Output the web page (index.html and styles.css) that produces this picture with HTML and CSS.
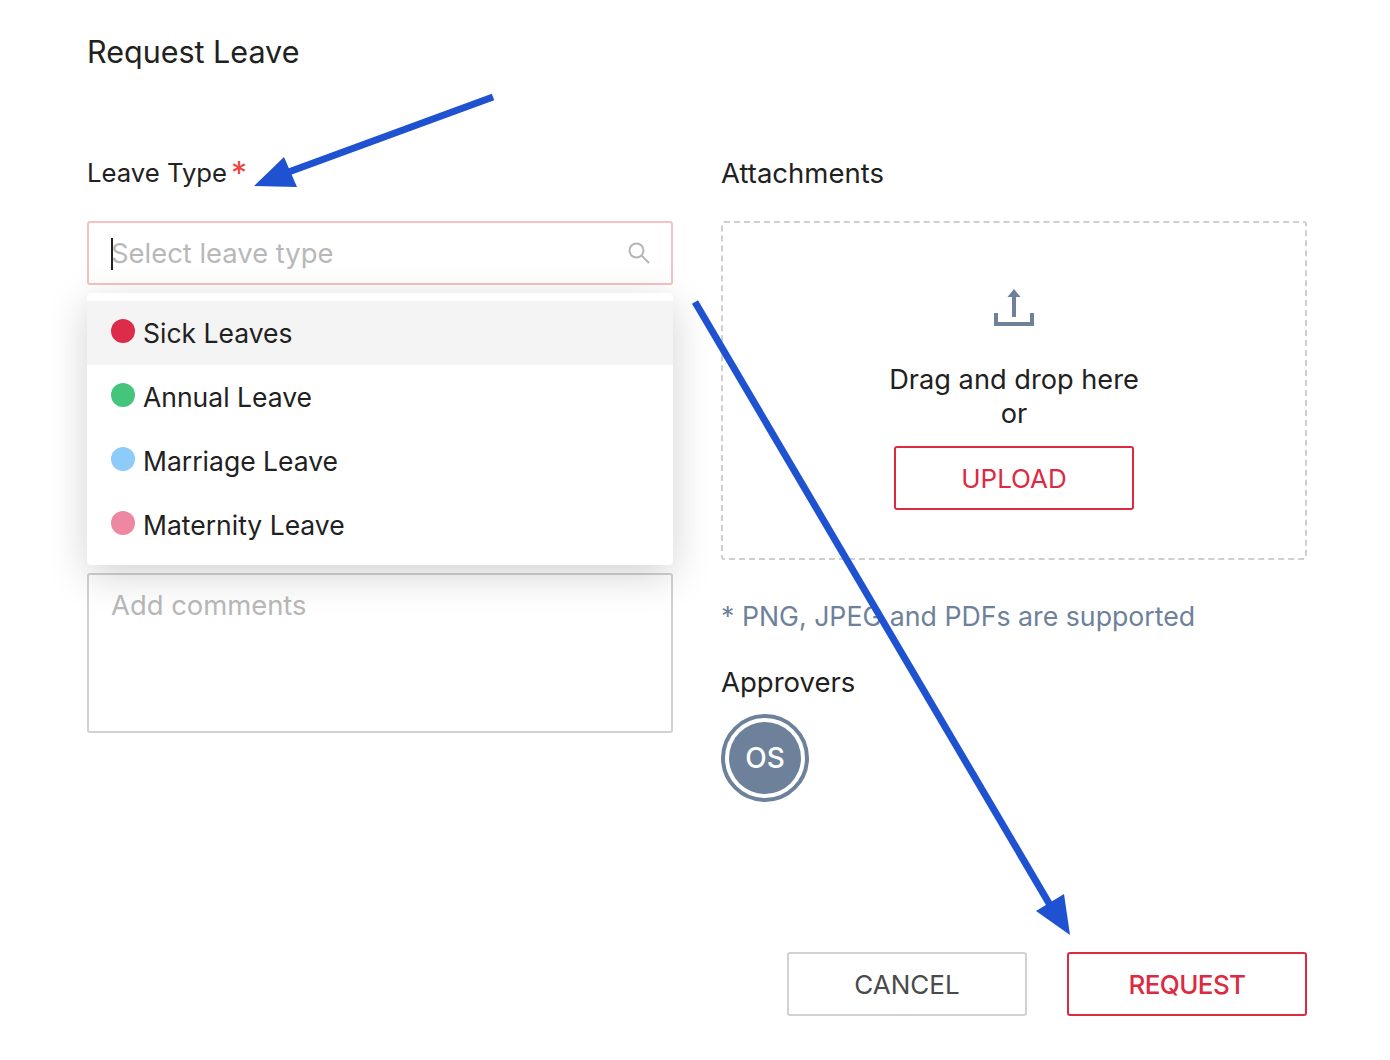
FILE: index.html
```html
<!DOCTYPE html>
<html lang="en">
<head>
  <meta charset="UTF-8">
  <title>Request Leave</title>
  <link rel="stylesheet" href="styles.css">
</head>
<body>
  <div class="page">
    <h1 class="page-title">Request Leave</h1>

    <div class="columns">
      <div class="col">
        <div class="label label-type">Leave Type<span class="required">*</span></div>

        <div class="select-wrap">
          <div class="select-box">
            <span class="caret"></span>
            <input class="select-input" type="text" placeholder="Select leave type">
            <svg class="search-icon" width="24" height="24" viewBox="0 0 24 24" fill="none" stroke="#b5b5b5" stroke-width="2">
              <circle cx="9.500" cy="9.500" r="7"/>
              <path d="M14.500 14.500l7.500 7.500"/>
            </svg>
          </div>

          <div class="dropdown">
            <div class="option active"><span class="dot dot-red"></span>Sick Leaves</div>
            <div class="option"><span class="dot dot-green"></span>Annual Leave</div>
            <div class="option"><span class="dot dot-blue"></span>Marriage Leave</div>
            <div class="option"><span class="dot dot-pink"></span>Maternity Leave</div>
          </div>
        </div>

        <textarea class="comments" placeholder="Add comments"></textarea>
      </div>

      <div class="col">
        <div class="label">Attachments</div>

        <div class="dropzone">
          <svg class="upload-icon" width="42" height="40" viewBox="0 0 42 40" fill="none" stroke="#6d819b" stroke-width="4">
            <path d="M21 29V6"/>
            <path d="M21 1l6.500 8h-13z" fill="#6d819b" stroke="none"/>
            <path d="M3 25v11h36V25"/>
          </svg>
          <div class="drop-text">Drag and drop here<br>or</div>
          <button class="btn btn-red">UPLOAD</button>
        </div>

        <div class="hint">* PNG, JPEG and PDFs are supported</div>

        <div class="label approvers-label">Approvers</div>
        <div class="avatar"><span class="avatar-inner">OS</span></div>
      </div>
    </div>

    <div class="actions">
      <button class="btn btn-grey">CANCEL</button>
      <button class="btn btn-red btn-request">REQUEST</button>
    </div>
  </div>

  <!-- annotation arrows drawn over the screenshot -->
  <svg class="arrows" width="1390" height="1060" viewBox="0 0 1390 1060">
    <path d="M493 97L275 177" stroke="#1f52d0" stroke-width="7" fill="none"/>
    <path d="M254 186L284 157L297 187Z" fill="#1f52d0"/>
    <path d="M695 302L1050 905" stroke="#1f52d0" stroke-width="7" fill="none"/>
    <path d="M1070 935L1036 911L1064 894Z" fill="#1f52d0"/>
  </svg>
</body>
</html>
```

FILE: styles.css
```css
* {
  box-sizing: border-box;
}

body {
  margin: 0;
  background-color: #fff;
  font-family: 'Inter', 'Liberation Sans', sans-serif;
  color: #212121;
}

.page {
  position: relative;
  width: 1390px;
  height: 1060px;
  padding: 33px 83px 0 87px;
}

.page-title {
  margin: 0 0 87px;
  font-size: 30.500px;
  line-height: 38px;
  font-weight: 400;
}

.columns {
  display: grid;
  grid-template-columns: 586px 586px;
  gap: 48px;
}

.label {
  font-size: 27.500px;
  line-height: 30px;
  height: 30px;
  margin-bottom: 33px;
}

.label-type {
  font-size: 25.700px;
}

.required {
  color: #f0443e;
  margin-left: 4px;
  font-size: 32px;
  line-height: 20px;
  vertical-align: -3px;
}

.select-wrap {
  position: relative;
  margin-bottom: 288px;
}

.select-box {
  position: relative;
  display: flex;
  align-items: center;
  height: 64px;
  padding: 0 20px 0 22px;
  border: 2px solid #f6c1c1;
  border-radius: 3px;
}

.caret {
  position: absolute;
  left: 22px;
  top: 15px;
  width: 2px;
  height: 32px;
  background-color: #222;
}

.select-input {
  flex: 1;
  min-width: 0;
  border: 0;
  outline: none;
  padding: 0;
  font: inherit;
  font-size: 27.400px;
  color: #212121;
}

.select-input::placeholder,
.comments::placeholder {
  color: #b8b8b8;
  opacity: 1;
}

.dropdown {
  position: absolute;
  top: 72px;
  left: 0;
  right: 0;
  height: 272px;
  padding-top: 8px;
  background-color: #fff;
  border-radius: 4px;
  box-shadow: 0 10px 40px rgba(0, 0, 0, 0.18);
  z-index: 2;
}

.option {
  display: flex;
  align-items: center;
  height: 64px;
  padding-left: 24px;
  font-size: 26.500px;
}

.option.active {
  background-color: #f4f4f4;
}

.dot {
  width: 24px;
  height: 24px;
  margin: -4px 8px 0 0;
  border-radius: 50%;
}

.dot-red { background-color: #dd2c4a; }
.dot-green { background-color: #45c57c; }
.dot-blue { background-color: #8dcbf8; }
.dot-pink { background-color: #ee88a0; }

.comments {
  display: block;
  width: 100%;
  height: 160px;
  padding: 12px 22px;
  border: 2px solid #d2d2d2;
  border-radius: 3px;
  outline: none;
  resize: none;
  font: inherit;
  font-size: 27.400px;
  line-height: 36px;
}

.dropzone {
  display: flex;
  flex-direction: column;
  align-items: center;
  height: 339px;
  padding-top: 65px;
  border: 2px dashed #cfcfcf;
  border-radius: 3px;
}

.drop-text {
  margin: 35px 0 15px;
  text-align: center;
  font-size: 27.200px;
  line-height: 34px;
}

.btn {
  width: 240px;
  height: 64px;
  background-color: #fff;
  border-radius: 3px;
  font-family: inherit;
  font-size: 26px;
}

.btn-red {
  color: #dc2a42;
  border: 2px solid #dc2a42;
}

.btn-grey {
  color: #4a4a4a;
  border: 2px solid #d2d2d2;
}

.btn-request {
  font-weight: 500;
  letter-spacing: -0.6px;
}

.hint {
  margin-top: 38px;
  font-size: 26.700px;
  line-height: 36px;
  color: #6d819b;
}

.approvers-label {
  margin: 33px 0 17px;
}

.avatar {
  display: flex;
  align-items: center;
  justify-content: center;
  width: 88px;
  height: 88px;
  border: 4px solid #6d819b;
  border-radius: 50%;
}

.avatar-inner {
  display: flex;
  align-items: center;
  justify-content: center;
  width: 72px;
  height: 72px;
  border-radius: 50%;
  background-color: #6d819b;
  color: #fff;
  font-size: 28px;
  font-weight: 500;
}

.actions {
  position: absolute;
  top: 952px;
  right: 83px;
  display: flex;
  gap: 40px;
}

.arrows {
  position: absolute;
  top: 0;
  left: 0;
  pointer-events: none;
  z-index: 5;
}
```
